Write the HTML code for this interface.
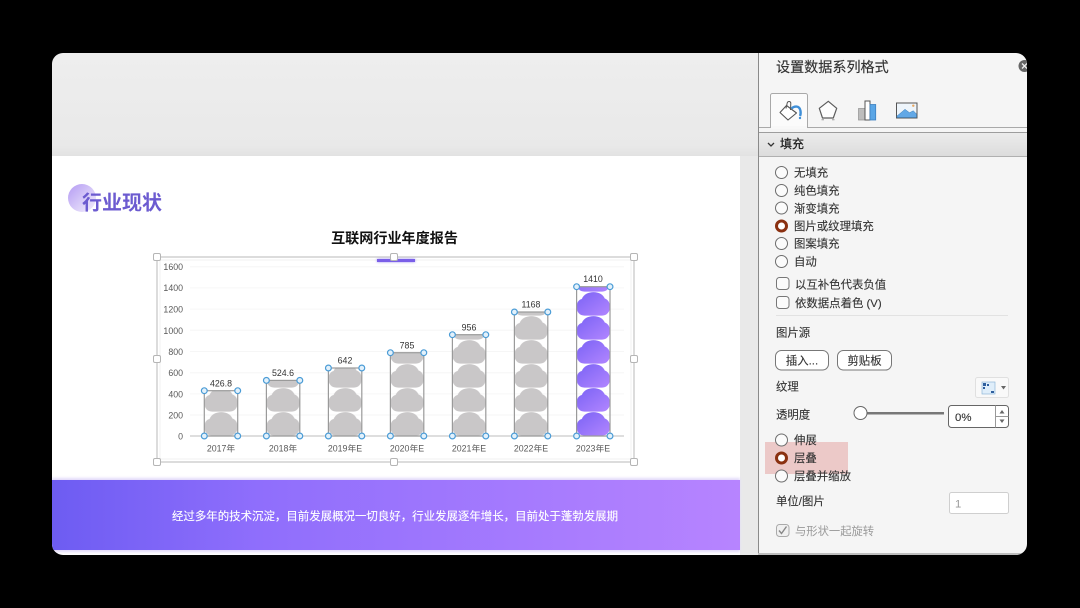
<!DOCTYPE html>
<html><head><meta charset="utf-8"><style>
html,body{margin:0;padding:0;background:#000;width:1080px;height:608px;overflow:hidden}
svg{display:block}
text{font-family:"Liberation Sans","Noto Sans CJK SC",sans-serif}
.p{font-size:11.4px;fill:#333;stroke:#333;stroke-width:.12}
.x{font-size:8.8px;fill:#595959;text-anchor:middle}
.v{font-size:8.8px;fill:#333;text-anchor:middle}
.y{font-size:8.8px;fill:#595959;text-anchor:end}
</style></head><body>
<svg width="1080" height="608" viewBox="0 0 1080 608" xmlns="http://www.w3.org/2000/svg">
<defs>
<clipPath id="win"><rect x="52" y="53" width="975" height="502" rx="11"/></clipPath>
<linearGradient id="band" x1="0" y1="0" x2="1" y2="0"><stop offset="0" stop-color="#6d5cf2"/><stop offset=".3" stop-color="#8f6efc"/><stop offset="1" stop-color="#b784ff"/></linearGradient>
<linearGradient id="circ" x1="0" y1="0" x2="1" y2="1"><stop offset="0" stop-color="#b49bf3"/><stop offset="1" stop-color="#f4f1fc"/></linearGradient>
<linearGradient id="cl" x1="0" y1="0" x2="1" y2="1"><stop offset="0" stop-color="#7a62f5"/><stop offset="1" stop-color="#b286ff"/></linearGradient>
<linearGradient id="hd" x1="0" y1="0" x2="0" y2="1"><stop offset="0" stop-color="#ececec"/><stop offset="1" stop-color="#dcdcdc"/></linearGradient>
<linearGradient id="top" x1="0" y1="0" x2="0" y2="1"><stop offset="0" stop-color="#eeeeee"/><stop offset=".9" stop-color="#e9e9e9"/><stop offset="1" stop-color="#e2e2e2"/></linearGradient>
<filter id="sh" x="-20%" y="-100%" width="140%" height="300%"><feGaussianBlur stdDeviation="1.2"/></filter>
<path id="cloud" d="M8,23.600 C3,23.600 0,20 0,15 C0,11 1.800,7.800 5.200,7 C6.800,2.600 11.500,0.100 17,0.100 C22.500,0.100 26.500,2.600 28.200,6.500 C31.600,7.600 33.400,11 33.400,15 C33.400,20 30,23.600 25.500,23.600 Z"/>
<pattern id="g0" patternUnits="userSpaceOnUse" x="204.3" y="4" width="33.4" height="24"><use href="#cloud" fill="#c9c7c8"/></pattern>
<pattern id="g1" patternUnits="userSpaceOnUse" x="266.4" y="4" width="33.4" height="24"><use href="#cloud" fill="#c9c7c8"/></pattern>
<pattern id="g2" patternUnits="userSpaceOnUse" x="328.4" y="4" width="33.4" height="24"><use href="#cloud" fill="#c9c7c8"/></pattern>
<pattern id="g3" patternUnits="userSpaceOnUse" x="390.4" y="4" width="33.4" height="24"><use href="#cloud" fill="#c9c7c8"/></pattern>
<pattern id="g4" patternUnits="userSpaceOnUse" x="452.4" y="4" width="33.4" height="24"><use href="#cloud" fill="#c9c7c8"/></pattern>
<pattern id="g5" patternUnits="userSpaceOnUse" x="514.4" y="4" width="33.4" height="24"><use href="#cloud" fill="#c9c7c8"/></pattern>
<pattern id="g6" patternUnits="userSpaceOnUse" x="576.6" y="4" width="33.4" height="24"><use href="#cloud" fill="url(#cl)"/></pattern>
</defs>
<rect width="1080" height="608" fill="#000"/>
<g clip-path="url(#win)">
  <rect x="52" y="53" width="707" height="103" fill="url(#top)"/>
  <rect x="740" y="156" width="19" height="399" fill="#e9e9e9"/>
  <rect x="52" y="156" width="688" height="399" fill="#fff"/>
  <rect x="52" y="478" width="688" height="74" fill="#e2dafa" filter="url(#sh)"/>
  <rect x="52" y="480" width="688" height="70" fill="url(#band)"/>
  <text x="395" y="520" text-anchor="middle" font-size="11.450" fill="#fff" stroke="#fff" stroke-width=".12">经过多年的技术沉淀，目前发展概况一切良好，行业发展逐年增长，目前处于蓬勃发展期</text>

  <circle cx="82" cy="198" r="14" fill="url(#circ)"/>
  <text x="82" y="209.500" font-size="20" font-weight="700" fill="#6c5bd0">行业现状</text>
  <text x="394.500" y="243" text-anchor="middle" font-size="14.100" font-weight="700" fill="#111">互联网行业年度报告</text>

  <!-- chart frame -->
  <rect x="157" y="257" width="477" height="205" fill="#fff" stroke="#c4c4c4" stroke-width="1.200"/>
  <rect x="160" y="260" width="471" height="199" fill="none" stroke="#f0f0f0" stroke-width="1"/>
  <rect x="377" y="259" width="38" height="3" fill="#9a8cf0" filter="url(#sh)"/>
  <rect x="377" y="259" width="38" height="3" fill="#7a5fe8"/>
  <g stroke="#f6f6f6" stroke-width="1">
    <path d="M190 266.700H624M190 287.900H624M190 309.100H624M190 330.300H624M190 351.500H624M190 372.700H624M190 393.900H624M190 415H624"/>
  </g>
  <g>
    <text class="y" x="183" y="270">1600</text>
    <text class="y" x="183" y="291">1400</text>
    <text class="y" x="183" y="312.500">1200</text>
    <text class="y" x="183" y="334">1000</text>
    <text class="y" x="183" y="355">800</text>
    <text class="y" x="183" y="376">600</text>
    <text class="y" x="183" y="397.500">400</text>
    <text class="y" x="183" y="418.500">200</text>
    <text class="y" x="183" y="439.500">0</text>
  </g>
  <rect x="190" y="435.400" width="434" height="1.200" fill="#c8c8c8"/>

  <!-- bars -->
  <g stroke="#9a9a9a" stroke-width="1.200">
    <rect x="204.300" y="390.700" width="33.400" height="45.300" fill="url(#g0)"/>
    <rect x="266.400" y="380.400" width="33.400" height="55.600" fill="url(#g1)"/>
    <rect x="328.400" y="368" width="33.400" height="68" fill="url(#g2)"/>
    <rect x="390.400" y="352.700" width="33.400" height="83.300" fill="url(#g3)"/>
    <rect x="452.400" y="334.700" width="33.400" height="101.300" fill="url(#g4)"/>
    <rect x="514.400" y="312" width="33.400" height="124" fill="url(#g5)"/>
    <rect x="576.600" y="286.700" width="33.400" height="149.300" fill="url(#g6)"/>
  </g>
  <text class="v" x="221" y="386.500">426.8</text>
  <text class="v" x="283" y="376">524.6</text>
  <text class="v" x="345" y="363.500">642</text>
  <text class="v" x="407" y="348.500">785</text>
  <text class="v" x="469" y="330.500">956</text>
  <text class="v" x="531" y="307.500">1168</text>
  <text class="v" x="593" y="282">1410</text>
  <text class="x" x="221" y="451.500">2017年</text>
  <text class="x" x="283" y="451.500">2018年</text>
  <text class="x" x="345" y="451.500">2019年E</text>
  <text class="x" x="407" y="451.500">2020年E</text>
  <text class="x" x="469" y="451.500">2021年E</text>
  <text class="x" x="531" y="451.500">2022年E</text>
  <text class="x" x="593" y="451.500">2023年E</text>
  <g fill="#e3f1fb" stroke="#4b9cd6" stroke-width="1.200">
    <circle cx="204.300" cy="390.700" r="2.900"/><circle cx="237.700" cy="390.700" r="2.900"/><circle cx="204.300" cy="436" r="2.900"/><circle cx="237.700" cy="436" r="2.900"/>
    <circle cx="266.400" cy="380.400" r="2.900"/><circle cx="299.800" cy="380.400" r="2.900"/><circle cx="266.400" cy="436" r="2.900"/><circle cx="299.800" cy="436" r="2.900"/>
    <circle cx="328.400" cy="368" r="2.900"/><circle cx="361.800" cy="368" r="2.900"/><circle cx="328.400" cy="436" r="2.900"/><circle cx="361.800" cy="436" r="2.900"/>
    <circle cx="390.400" cy="352.700" r="2.900"/><circle cx="423.800" cy="352.700" r="2.900"/><circle cx="390.400" cy="436" r="2.900"/><circle cx="423.800" cy="436" r="2.900"/>
    <circle cx="452.400" cy="334.700" r="2.900"/><circle cx="485.800" cy="334.700" r="2.900"/><circle cx="452.400" cy="436" r="2.900"/><circle cx="485.800" cy="436" r="2.900"/>
    <circle cx="514.400" cy="312" r="2.900"/><circle cx="547.800" cy="312" r="2.900"/><circle cx="514.400" cy="436" r="2.900"/><circle cx="547.800" cy="436" r="2.900"/>
    <circle cx="576.600" cy="286.700" r="2.900"/><circle cx="610" cy="286.700" r="2.900"/><circle cx="576.600" cy="436" r="2.900"/><circle cx="610" cy="436" r="2.900"/>
  </g>
  <g fill="#fff" stroke="#b5b5b5" stroke-width="1">
    <rect x="153.500" y="253.500" width="7" height="7" rx="1.500"/><rect x="390.500" y="253.500" width="7" height="7" rx="1.500"/><rect x="630.500" y="253.500" width="7" height="7" rx="1.500"/>
    <rect x="153.500" y="355.500" width="7" height="7" rx="1.500"/><rect x="630.500" y="355.500" width="7" height="7" rx="1.500"/>
    <rect x="153.500" y="458.500" width="7" height="7" rx="1.500"/><rect x="390.500" y="458.500" width="7" height="7" rx="1.500"/><rect x="630.500" y="458.500" width="7" height="7" rx="1.500"/>
  </g>

  <!-- side panel -->
  <rect x="758" y="53" width="270" height="502" fill="#f5f5f5"/>
  <rect x="758" y="53" width="1" height="502" fill="#8a8a8a"/>
  <rect x="758" y="553" width="270" height="2" fill="#bdbdbd"/>
  <text x="776" y="72" font-size="14.100" fill="#333" stroke="#333" stroke-width=".15">设置数据系列格式</text>
  <circle cx="1024.500" cy="66" r="6" fill="#666"/>
  <path d="M1022 63.500l5 5m0-5l-5 5" stroke="#eee" stroke-width="1.300"/>

  <!-- tabs -->
  <rect x="759" y="127" width="269" height="1" fill="#a9a9a9"/>
  <path d="M770.500 127.500V95.500a2 2 0 0 1 2-2h33a2 2 0 0 1 2 2V127.500" fill="#fbfbfb" stroke="#a9a9a9"/>
  <rect x="771" y="126" width="36" height="3" fill="#f8f8f8"/>
  <!-- bucket -->
  <path d="M780 112.500L786.500 105.500L796.500 113L788 120Z" fill="#fff" stroke="#555" stroke-width="1.100" stroke-linejoin="round"/>
  <path d="M786 108.500L787.200 103C787.700 101 790.500 101 790.800 103L790.500 110" fill="none" stroke="#555" stroke-width="1"/>
  <path d="M791.500 108.500C794 106 799.500 105 800.500 111C800.800 113 800.500 115 800 116" fill="none" stroke="#3f8fd8" stroke-width="2.400"/>
  <circle cx="800" cy="118" r="1.200" fill="#3f8fd8"/>
  <!-- pentagon -->
  <path d="M828.300 101.300L836.700 108.300L833.300 118H822.500L819.300 108.300Z" fill="#fdfdfd" stroke="#5c5c5c" stroke-width="1.200" stroke-linejoin="round"/>
  <path d="M821.500 119.800h2.500M832 119.800h2.500" stroke="#999" stroke-width="1"/>
  <!-- bars icon -->
  <rect x="858.500" y="108.500" width="6.500" height="11.500" fill="#bdbdbd" stroke="#999" stroke-width=".8"/>
  <rect x="865" y="101" width="5" height="19" fill="#fff" stroke="#555" stroke-width="1"/>
  <rect x="870" y="104.500" width="5.700" height="15.500" fill="#5aa6e6" stroke="#3c80c0" stroke-width=".8"/>
  <!-- image icon -->
  <rect x="896.500" y="103" width="20.500" height="15" fill="#eef5fb" stroke="#555" stroke-width="1"/>
  <path d="M897 116L905 109.300L909.500 112.700L913.300 110.700L916.500 114V117.500H897Z" fill="#62a8e6" stroke="#4080b8" stroke-width=".5"/>
  <circle cx="913.300" cy="105.700" r="1.200" fill="#e8a65f"/>

  <!-- section header -->
  <rect x="759" y="132" width="269" height="24" fill="url(#hd)"/>
  <rect x="759" y="132" width="269" height="1" fill="#9d9d9d"/>
  <rect x="759" y="156" width="269" height="1" fill="#b0b0b0"/>
  <path d="M768 143l3 3 3-3" fill="none" stroke="#333" stroke-width="1.300"/>
  <text x="780" y="148" font-size="12" fill="#222" stroke="#222" stroke-width=".25">填充</text>

  <!-- radios -->
  <g fill="#fbfbfb" stroke="#6d6d6d" stroke-width="1">
    <circle cx="781.500" cy="172.500" r="6"/><circle cx="781.500" cy="190.500" r="6"/><circle cx="781.500" cy="208" r="6"/>
    <circle cx="781.500" cy="243.500" r="6"/><circle cx="781.500" cy="261.500" r="6"/>
  </g>
  <circle cx="781.500" cy="226" r="5" fill="#fff" stroke="#8a3010" stroke-width="3"/>
  <text class="p" x="794" y="176.500">无填充</text>
  <text class="p" x="794" y="194.500">纯色填充</text>
  <text class="p" x="794" y="212.500">渐变填充</text>
  <text class="p" x="794" y="230">图片或纹理填充</text>
  <text class="p" x="794" y="247.500">图案填充</text>
  <text class="p" x="794" y="265.500">自动</text>

  <rect x="776.500" y="277.500" width="12.500" height="12" rx="3" fill="#fbfbfb" stroke="#777"/>
  <rect x="776.500" y="296.500" width="12.500" height="12" rx="3" fill="#fbfbfb" stroke="#777"/>
  <text class="p" x="795" y="288.500">以互补色代表负值</text>
  <text class="p" x="795" y="307">依数据点着色 (V)</text>
  <rect x="776" y="315" width="232" height="1" fill="#e2e2e2"/>
  <text class="p" x="776" y="336.500">图片源</text>
  <rect x="775.500" y="350.500" width="53" height="19.500" rx="6" fill="#fff" stroke="#777"/>
  <rect x="837.500" y="350.500" width="54" height="19.500" rx="6" fill="#fff" stroke="#777"/>
  <text class="p" x="802" y="364.500" text-anchor="middle">插入...</text>
  <text class="p" x="864.500" y="364.500" text-anchor="middle">剪贴板</text>

  <text class="p" x="776" y="390.500">纹理</text>
  <rect x="975.500" y="377.500" width="33" height="20" rx="2" fill="#f9f9f9" stroke="#e0e0e0"/>
  <rect x="982" y="382" width="13" height="12" fill="#dfeefa" stroke="#8fb7d8" stroke-width=".7"/>
  <path d="M983 383h3v3h-3zM987 384h2v2h-2zM983 387h2v2h-2zM991 391h3v2h-3z" fill="#2f5f9e"/>
  <path d="M1001 386h5l-2.500 3.500z" fill="#666"/>

  <text class="p" x="776" y="418.500">透明度</text>
  <rect x="860" y="412" width="84" height="2.500" fill="#777"/>
  <circle cx="860.500" cy="413" r="6.500" fill="#fff" stroke="#666"/>
  <rect x="948.500" y="405.500" width="60" height="22" rx="3" fill="#fff" stroke="#666"/>
  <path d="M995.500 405.500v22M995.500 416.500h13" stroke="#999" fill="none"/>
  <path d="M1002 410l2.500 3.500h-5zM1002 423l2.500-3.500h-5z" fill="#666"/>
  <text class="p" x="955" y="421">0%</text>

  <rect x="765" y="442" width="83" height="32" fill="#ecc9c8"/>
  <circle cx="781.500" cy="440" r="6" fill="#fbfbfb" stroke="#6d6d6d"/>
  <circle cx="781.500" cy="476" r="6" fill="#fbfbfb" stroke="#6d6d6d"/>
  <circle cx="781.500" cy="458" r="5" fill="#fff" stroke="#8a3010" stroke-width="3"/>
  <text class="p" x="794" y="444">伸展</text>
  <text class="p" x="794" y="462">层叠</text>
  <text class="p" x="794" y="480">层叠并缩放</text>

  <text class="p" x="776" y="505">单位/图片</text>
  <rect x="949.500" y="492.500" width="59" height="21" rx="2" fill="#fff" stroke="#cfcfcf"/>
  <text x="955" y="507.500" font-size="11.300" fill="#999">1</text>
  <rect x="776.500" y="524.500" width="12.500" height="12" rx="3" fill="#f0f0f0" stroke="#aaa"/>
  <path d="M779 530.500l2.500 3 5-7" fill="none" stroke="#888" stroke-width="1.400"/>
  <text x="795" y="535" font-size="11.300" fill="#999">与形状一起旋转</text>
</g>
</svg>
</body></html>
